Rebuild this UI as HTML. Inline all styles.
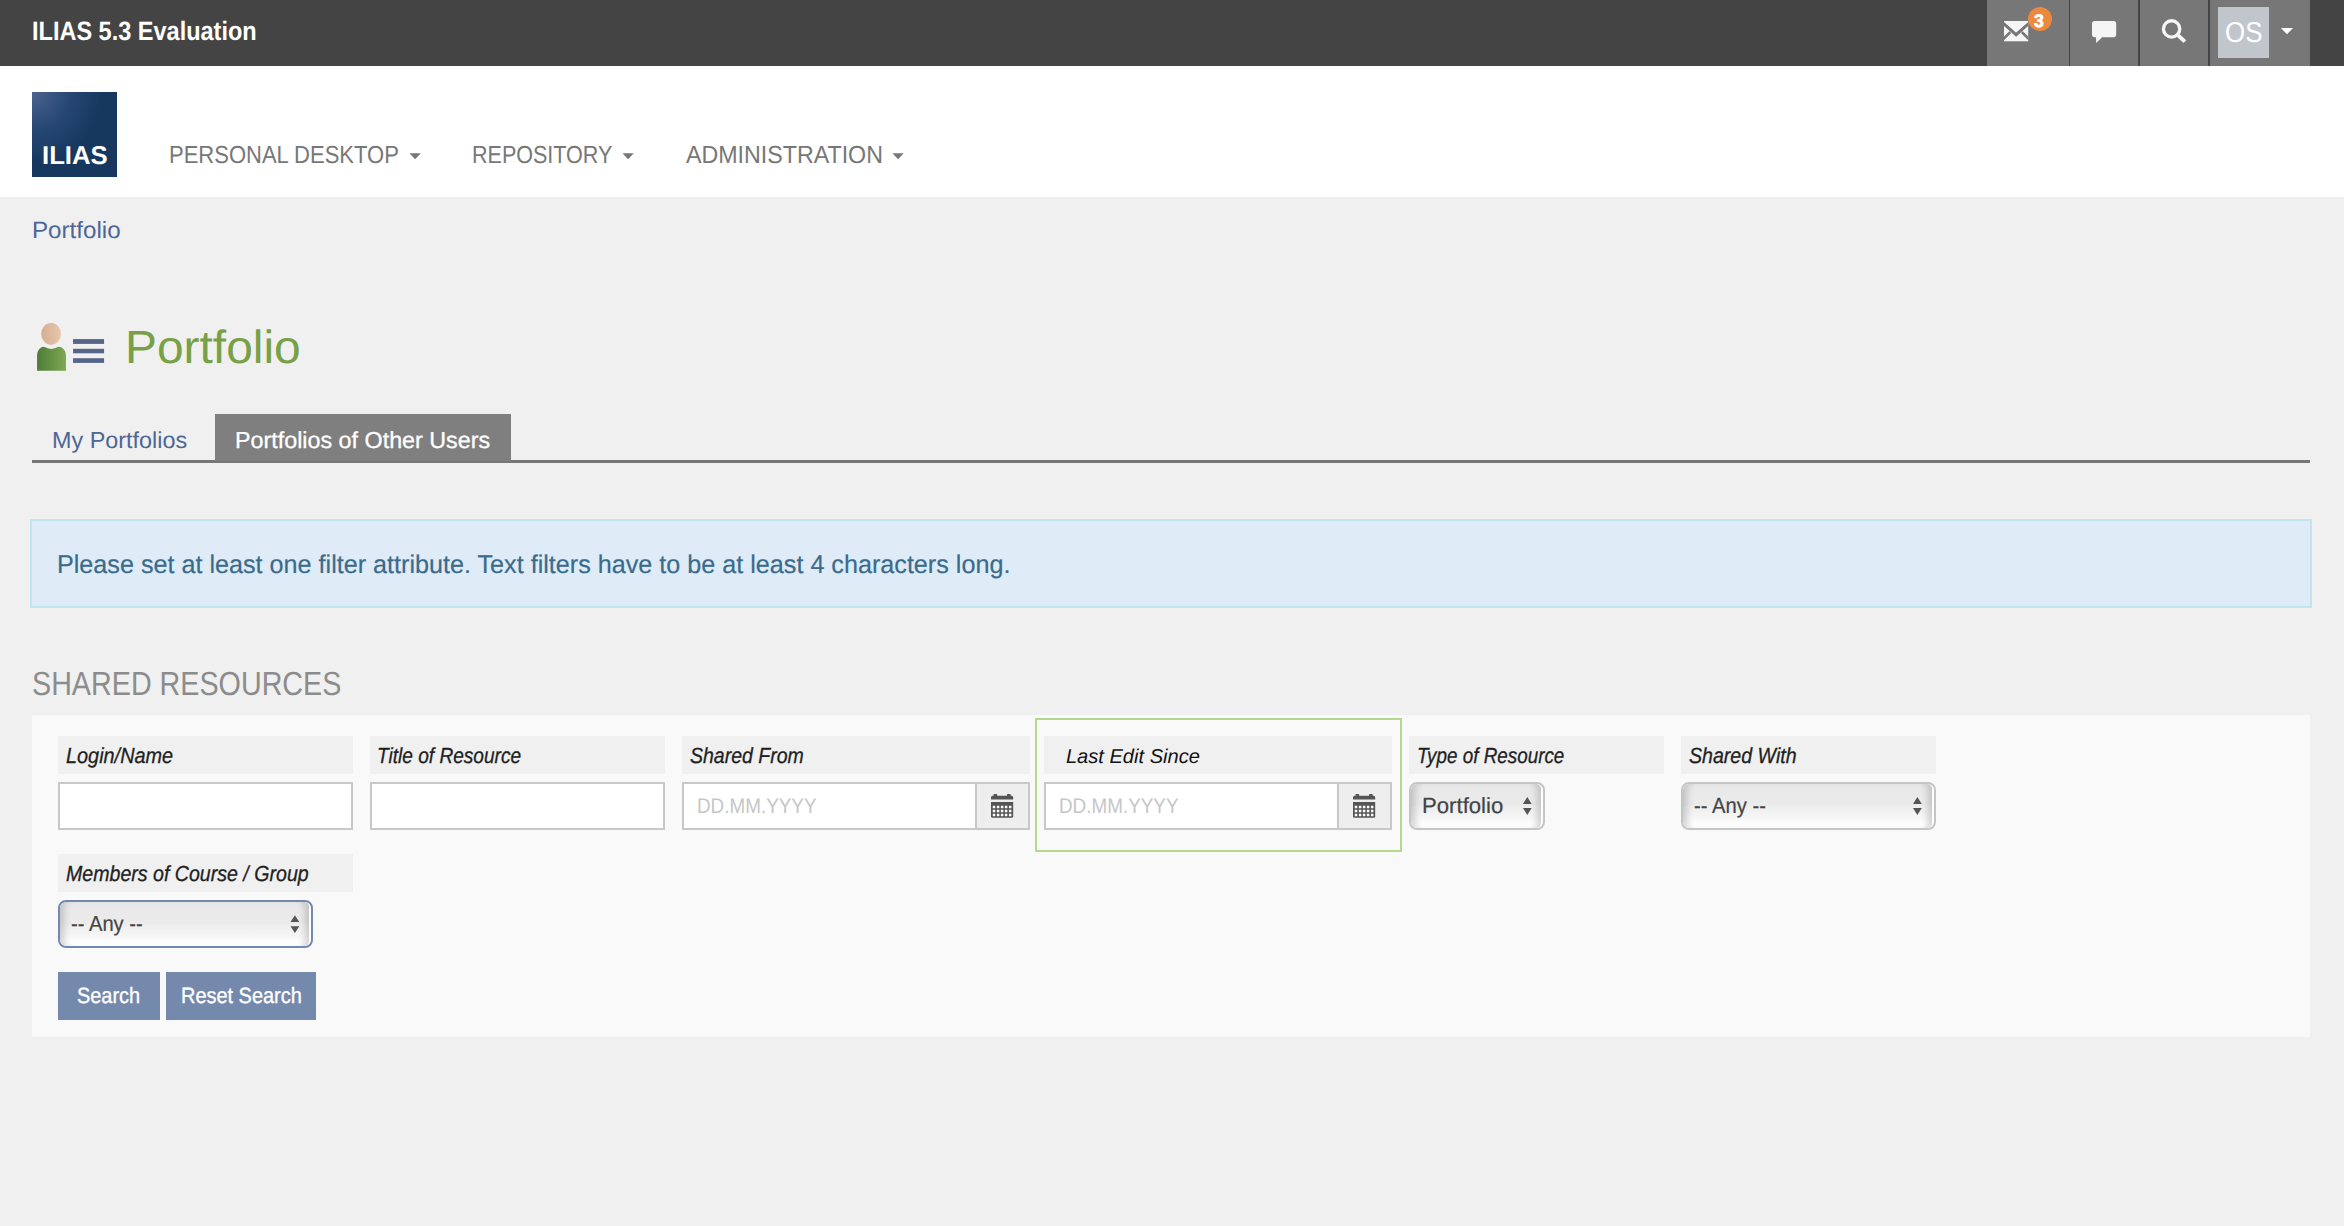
<!DOCTYPE html>
<html lang="en">
<head>
<meta charset="utf-8">
<title>ILIAS 5.3 Evaluation - Portfolio</title>
<style>
*{box-sizing:border-box;margin:0;padding:0}
html,body{width:2344px;height:1226px;overflow:hidden}
body{background:#f0f0f0;font-family:"Liberation Sans",sans-serif;color:#333;position:relative;text-rendering:geometricPrecision}
.abs{position:absolute}
.t{position:absolute;white-space:nowrap;line-height:1;transform-origin:0 0}
svg{position:absolute;overflow:visible}
/* top bar */
#topbar{left:0;top:0;width:2344px;height:66px;background:#444}
#toptitle{font-weight:bold;color:#fff}
.tbi{top:0;height:66px;background:#777}
#avatar{left:2218px;top:7px;width:51px;height:51px;background:#c0c6cb}
#os{color:#fff}
#badge{left:2028px;top:7px;width:24px;height:24px;border-radius:50%;background:#eb893e}
#bdg{color:#fff;font-weight:bold;-webkit-text-stroke:0.7px #fff}
#ucaret{left:2281px;top:28px;width:0;height:0;border-left:6px solid transparent;border-right:6px solid transparent;border-top:6.5px solid #fff}
/* main nav */
#nav{left:0;top:66px;width:2344px;height:131px;background:#fff}
#logo{left:32px;top:92px;width:85px;height:85px;background:radial-gradient(circle 70px at 0 0,#4e658d 0%,#3b5683 25%,#274773 55%,#16385f 100%),#16385f}
#logotxt{font-weight:bold;color:#fff}
.navitem{color:#777}
.caret{width:0;height:0;border-left:5.7px solid transparent;border-right:5.7px solid transparent;border-top:6px solid #7d7d7d;top:153.2px}
/* breadcrumb */
#crumb{color:#4c6696}
/* title */
#ptitle{color:#77a047}
/* tabs */
#tabline{left:32px;top:460px;width:2278px;height:3px;background:#777}
#tab1{color:#4c6696}
#tab2bg{left:215px;top:414px;width:296px;height:47px;background:#7f7f7f}
#tab2{color:#fff;-webkit-text-stroke:0.3px #fff}
/* info */
#info{left:30px;top:519px;width:2282px;height:89px;background:#dfecf7;border:2px solid #bfe5ee}
#infotxt{color:#3a6b8c;-webkit-text-stroke:0.2px #3a6b8c}
/* section */
#sect{color:#8c8c8c}
#panel{left:32px;top:715px;width:2278px;height:322px;background:#f9f9f9}
.lbl{height:38px;background:#f0f0f0}
.lt{font-style:italic;color:#1f1f1f;-webkit-text-stroke:0.3px #1f1f1f}
.inp{height:48px;background:#fff;border:2px solid #c8c8c8}
.addon{height:48px;background:#eee;border:2px solid #c8c8c8}
.ph{color:#c6c6c6}
.sel{height:48px;border-radius:8px;border:2px solid #c5c5c5;background:#fff;overflow:hidden}
.sel::before{content:"";position:absolute;left:0;top:0;right:2.4px;bottom:0;border-radius:6px 5px 5px 6px;background:linear-gradient(to bottom,#e8e8e8 0%,#ebebeb 49%,#eeeeee 51%,#f5f5f5 75%,#fdfdfd 90%,#fff 100%);box-shadow:inset 9px 0 7px -5px rgba(0,0,0,.17),inset -9px 0 7px -5px rgba(0,0,0,.17)}
.sel.focus{border-color:#7489af}
.st{color:#444;-webkit-text-stroke:0.2px #444}
.arr{width:0;height:0;border-left:4.6px solid transparent;border-right:4.6px solid transparent}
.arr.up{border-bottom:7px solid #555}
.arr.dn{border-top:7px solid #555}
.btn{top:972px;height:48px;background:#7489ac}
.bt{color:#fff;-webkit-text-stroke:0.35px #fff}
#hl{left:1035px;top:718px;width:367px;height:134px;border:2px solid #b5d88e}
#toptitle{left:31.7px;top:18px;font-size:26.6px;transform:scaleX(0.8839)}
#logotxt{left:42.0px;top:144px;font-size:25.7px}
#nav1{left:168.5px;top:144px;font-size:24.7px;transform:scaleX(0.8910)}
#nav2{left:472.2px;top:144px;font-size:24.7px;transform:scaleX(0.8716)}
#nav3{left:685.6px;top:144px;font-size:24.7px;transform:scaleX(0.9405)}
#crumb{left:31.8px;top:219px;font-size:23.5px;transform:scaleX(1.0280)}
#ptitle{left:125.1px;top:324px;font-size:46.5px;transform:scaleX(1.0299)}
#tab1{left:52.0px;top:429px;font-size:23.1px;transform:scaleX(1.0120)}
#tab2{left:235.1px;top:429px;font-size:23.1px;transform:scaleX(1.0091)}
#infotxt{left:57.0px;top:553px;font-size:25.7px;transform:scaleX(0.9795)}
#sect{left:31.5px;top:668px;font-size:33.4px;transform:scaleX(0.8595)}
#l1{left:65.9px;top:745px;font-size:21.8px;transform:scaleX(0.9114)}
#l2{left:377.2px;top:745px;font-size:21.8px;transform:scaleX(0.8758)}
#l3{left:689.5px;top:745px;font-size:21.8px;transform:scaleX(0.8946)}
#l4{left:1065.9px;top:747px;font-size:20.1px}
#l5{left:1416.8px;top:745px;font-size:21.8px;transform:scaleX(0.8644)}
#l6{left:1689.0px;top:745px;font-size:21.8px;transform:scaleX(0.8984)}
#l7{left:66.2px;top:863px;font-size:21.8px;transform:scaleX(0.8983)}
#ph1{left:696.7px;top:796px;font-size:21.2px;transform:scaleX(0.8902)}
#ph2{left:1058.5px;top:796px;font-size:21.2px;transform:scaleX(0.8902)}
#s1{left:1421.8px;top:795px;font-size:21.9px;transform:scaleX(1.0123)}
#s2{left:1694.4px;top:795px;font-size:21.9px;transform:scaleX(0.9240)}
#s3{left:71.0px;top:913px;font-size:21.8px;transform:scaleX(0.9260)}
#b1{left:76.8px;top:985px;font-size:22.1px;transform:scaleX(0.9018)}
#b2{left:180.5px;top:985px;font-size:22.1px;transform:scaleX(0.9022)}
#os{left:2225.0px;top:19px;font-size:28.8px;transform:scaleX(0.8996)}
#bdg{left:2034.3px;top:12px;font-size:18.3px;transform:scaleX(0.9655)}
</style>
</head>
<body>
<!-- TOP BAR -->
<div id="topbar" class="abs"></div>
<div id="toptitle" class="t">ILIAS 5.3 Evaluation</div>
<div class="abs tbi" style="left:1987px;width:82px"></div>
<div class="abs tbi" style="left:2070px;width:68px"></div>
<div class="abs tbi" style="left:2140px;width:68px"></div>
<div class="abs tbi" style="left:2210px;width:100px"></div>
<!-- mail icon -->
<svg style="left:2003.9px;top:20.9px" width="24.2" height="20.3" viewBox="0 0 24.2 20.3">
  <defs><clipPath id="ec"><rect x="0" y="0" width="24.2" height="20.3"/></clipPath></defs>
  <rect x="0" y="0" width="24.2" height="20.3" fill="#f6f6f6"/>
  <g clip-path="url(#ec)"><path d="M-1 2.1 L12.1 13.7 L25.2 2.1" fill="none" stroke="#777" stroke-width="2.9" stroke-linejoin="miter"/>
  <path d="M-1 18.4 L6.3 11.1 M25.2 18.4 L17.9 11.1" fill="none" stroke="#777" stroke-width="2.7"/></g>
</svg>
<div id="badge" class="abs"></div>
<div id="bdg" class="t">3</div>
<!-- comment icon -->
<svg style="left:2092px;top:21px" width="24.2" height="22" viewBox="0 0 24.2 22">
  <path d="M2.6 0 H21.6 Q24.2 0 24.2 2.6 V13.6 Q24.2 16.2 21.6 16.2 H10.2 L4.1 22 V16.2 H2.6 Q0 16.2 0 13.6 V2.6 Q0 0 2.6 0 Z" fill="#f5f5f5"/>
</svg>
<!-- search icon -->
<svg style="left:2160px;top:17px" width="28" height="28" viewBox="0 0 28 28">
  <circle cx="11.6" cy="11.9" r="8.15" fill="none" stroke="#f5f5f5" stroke-width="3.3"/>
  <path d="M17.3 17.6 L24.9 24.7" stroke="#f5f5f5" stroke-width="3.9" stroke-linecap="butt"/>
</svg>
<div id="avatar" class="abs"></div>
<div id="os" class="t">OS</div>
<svg style="left:0;top:0" width="1" height="1"><polygon points="2280.9,27.9 2293.1,27.9 2287,34.3" fill="#fff"/></svg>

<!-- NAV -->
<div id="nav" class="abs"></div>
<div id="logo" class="abs"></div>
<div id="logotxt" class="t">ILIAS</div>
<div id="nav1" class="t navitem">PERSONAL DESKTOP</div>
<svg style="left:0;top:0" width="1" height="1"><polygon points="409.5,153.2 420.8,153.2 415.15,159.3" fill="#777"/></svg>
<div id="nav2" class="t navitem">REPOSITORY</div>
<svg style="left:0;top:0" width="1" height="1"><polygon points="622.5,153.2 633.8,153.2 628.15,159.3" fill="#777"/></svg>
<div id="nav3" class="t navitem">ADMINISTRATION</div>
<svg style="left:0;top:0" width="1" height="1"><polygon points="892.4,153.2 903.6999999999999,153.2 898.05,159.3" fill="#777"/></svg>

<!-- BREADCRUMB -->
<div id="crumb" class="t">Portfolio</div>

<!-- TITLE ICON -->
<svg style="left:36px;top:322px" width="70" height="50" viewBox="0 0 70 50">
  <defs>
    <linearGradient id="gh" x1="0" y1="0" x2="1" y2="0"><stop offset="0" stop-color="#d6ad8f"/><stop offset="1" stop-color="#e6c7ad"/></linearGradient>
    <linearGradient id="gb" x1="0" y1="0" x2="1" y2="0"><stop offset="0" stop-color="#4e7c39"/><stop offset="1" stop-color="#7ea852"/></linearGradient>
  </defs>
  <ellipse cx="15.1" cy="11.85" rx="9.9" ry="10.9" fill="url(#gh)"/>
  <path d="M1.05 48.8 V33.3 A7 8.5 0 0 1 8.05 24.8 Q15.2 29 22.4 24.8 A7.55 8.5 0 0 1 29.95 33.3 V48.8 Z" fill="url(#gb)"/>
  <rect x="37.05" y="17.1" width="31" height="4.8" fill="#566489"/>
  <rect x="37.05" y="26.8" width="31" height="4.5" fill="#566489"/>
  <rect x="37.05" y="36.2" width="31" height="4.7" fill="#566489"/>
</svg>
<div id="ptitle" class="t">Portfolio</div>

<!-- TABS -->
<div id="tabline" class="abs"></div>
<div id="tab1" class="t">My Portfolios</div>
<div id="tab2bg" class="abs"></div>
<div id="tab2" class="t">Portfolios of Other Users</div>

<!-- INFO -->
<div id="info" class="abs"></div>
<div id="infotxt" class="t">Please set at least one filter attribute. Text filters have to be at least 4 characters long.</div>

<!-- SECTION -->
<div id="sect" class="t">SHARED RESOURCES</div>
<div id="panel" class="abs"></div>
<div id="hl" class="abs"></div>

<!-- row 1 labels -->
<div class="abs lbl" style="left:58px;top:736px;width:295px"></div>
<div id="l1" class="t lt">Login/Name</div>
<div class="abs lbl" style="left:370px;top:736px;width:295px"></div>
<div id="l2" class="t lt">Title of Resource</div>
<div class="abs lbl" style="left:682px;top:736px;width:348px"></div>
<div id="l3" class="t lt">Shared From</div>
<div class="abs lbl" style="left:1044px;top:736px;width:348px"></div>
<div id="l4" class="t lt" style="color:#111;-webkit-text-stroke:0">Last Edit Since</div>
<div class="abs lbl" style="left:1409px;top:736px;width:255px"></div>
<div id="l5" class="t lt">Type of Resource</div>
<div class="abs lbl" style="left:1681px;top:736px;width:255px"></div>
<div id="l6" class="t lt">Shared With</div>

<!-- row 1 inputs -->
<div class="abs inp" style="left:58px;top:782px;width:295px"></div>
<div class="abs inp" style="left:370px;top:782px;width:295px"></div>
<div class="abs inp" style="left:682px;top:782px;width:295px"></div>
<div class="abs addon" style="left:975px;top:782px;width:55px"></div>
<div id="ph1" class="t ph">DD.MM.YYYY</div>
<div class="abs inp" style="left:1044px;top:782px;width:295px"></div>
<div class="abs addon" style="left:1337px;top:782px;width:55px"></div>
<div id="ph2" class="t ph">DD.MM.YYYY</div>
<svg style="left:990.8px;top:794.1px" width="22.2" height="23.8" viewBox="0 0 22.2 23.8"><path d="M1.6 1.8 H2.5 V0.7 Q2.5 0 3.2 0 H5.5 Q6.2 0 6.2 0.7 V1.8 H16 V0.7 Q16 0 16.7 0 H19 Q19.7 0 19.7 0.7 V1.8 H20.6 Q22.2 1.8 22.2 3.4 V5.6 H0 V3.4 Q0 1.8 1.6 1.8 Z" fill="#555"/><path d="M0 7.9 H22.2 V22.2 Q22.2 23.8 20.6 23.8 H1.6 Q0 23.8 0 22.2 Z" fill="#555"/><rect x="1.75" y="11.75" width="2.5" height="2.5" fill="#fbfbfb"/><rect x="5.85" y="11.75" width="2.5" height="2.5" fill="#fbfbfb"/><rect x="9.85" y="11.75" width="2.5" height="2.5" fill="#fbfbfb"/><rect x="13.85" y="11.75" width="2.5" height="2.5" fill="#fbfbfb"/><rect x="17.95" y="11.75" width="2.5" height="2.5" fill="#fbfbfb"/><rect x="1.75" y="15.75" width="2.5" height="2.5" fill="#fbfbfb"/><rect x="5.85" y="15.75" width="2.5" height="2.5" fill="#fbfbfb"/><rect x="9.85" y="15.75" width="2.5" height="2.5" fill="#fbfbfb"/><rect x="13.85" y="15.75" width="2.5" height="2.5" fill="#fbfbfb"/><rect x="17.95" y="15.75" width="2.5" height="2.5" fill="#fbfbfb"/><rect x="1.75" y="19.75" width="2.5" height="2.5" fill="#fbfbfb"/><rect x="5.85" y="19.75" width="2.5" height="2.5" fill="#fbfbfb"/><rect x="9.85" y="19.75" width="2.5" height="2.5" fill="#fbfbfb"/><rect x="13.85" y="19.75" width="2.5" height="2.5" fill="#fbfbfb"/><rect x="17.95" y="19.75" width="2.5" height="2.5" fill="#fbfbfb"/></svg>
<svg style="left:1353.0px;top:794.1px" width="22.2" height="23.8" viewBox="0 0 22.2 23.8"><path d="M1.6 1.8 H2.5 V0.7 Q2.5 0 3.2 0 H5.5 Q6.2 0 6.2 0.7 V1.8 H16 V0.7 Q16 0 16.7 0 H19 Q19.7 0 19.7 0.7 V1.8 H20.6 Q22.2 1.8 22.2 3.4 V5.6 H0 V3.4 Q0 1.8 1.6 1.8 Z" fill="#555"/><path d="M0 7.9 H22.2 V22.2 Q22.2 23.8 20.6 23.8 H1.6 Q0 23.8 0 22.2 Z" fill="#555"/><rect x="1.75" y="11.75" width="2.5" height="2.5" fill="#fbfbfb"/><rect x="5.85" y="11.75" width="2.5" height="2.5" fill="#fbfbfb"/><rect x="9.85" y="11.75" width="2.5" height="2.5" fill="#fbfbfb"/><rect x="13.85" y="11.75" width="2.5" height="2.5" fill="#fbfbfb"/><rect x="17.95" y="11.75" width="2.5" height="2.5" fill="#fbfbfb"/><rect x="1.75" y="15.75" width="2.5" height="2.5" fill="#fbfbfb"/><rect x="5.85" y="15.75" width="2.5" height="2.5" fill="#fbfbfb"/><rect x="9.85" y="15.75" width="2.5" height="2.5" fill="#fbfbfb"/><rect x="13.85" y="15.75" width="2.5" height="2.5" fill="#fbfbfb"/><rect x="17.95" y="15.75" width="2.5" height="2.5" fill="#fbfbfb"/><rect x="1.75" y="19.75" width="2.5" height="2.5" fill="#fbfbfb"/><rect x="5.85" y="19.75" width="2.5" height="2.5" fill="#fbfbfb"/><rect x="9.85" y="19.75" width="2.5" height="2.5" fill="#fbfbfb"/><rect x="13.85" y="19.75" width="2.5" height="2.5" fill="#fbfbfb"/><rect x="17.95" y="19.75" width="2.5" height="2.5" fill="#fbfbfb"/></svg>
<div class="abs sel" style="left:1409px;top:782px;width:136px"></div>
<div id="s1" class="t st">Portfolio</div>
<svg style="left:0;top:0" width="1" height="1"><polygon points="1522.9,803.9 1531.7,803.9 1527.3,797.0" fill="#555"/><polygon points="1522.9,808.0 1531.7,808.0 1527.3,814.9" fill="#555"/></svg>
<div class="abs sel" style="left:1681px;top:782px;width:255px"></div>
<div id="s2" class="t st">-- Any --</div>
<svg style="left:0;top:0" width="1" height="1"><polygon points="1913.0,803.9 1921.8,803.9 1917.4,797.0" fill="#555"/><polygon points="1913.0,808.0 1921.8,808.0 1917.4,814.9" fill="#555"/></svg>

<!-- row 2 -->
<div class="abs lbl" style="left:58px;top:854px;width:295px"></div>
<div id="l7" class="t lt">Members of Course / Group</div>
<div class="abs sel focus" style="left:58px;top:900px;width:255px"></div>
<div id="s3" class="t st">-- Any --</div>
<svg style="left:0;top:0" width="1" height="1"><polygon points="290.5,922.1 299.3,922.1 294.9,915.2" fill="#555"/><polygon points="290.5,926.2 299.3,926.2 294.9,933.1" fill="#555"/></svg>

<!-- buttons -->
<div class="abs btn" style="left:58px;width:102px"></div>
<div id="b1" class="t bt">Search</div>
<div class="abs btn" style="left:166px;width:150px"></div>
<div id="b2" class="t bt">Reset Search</div>
</body>
</html>
